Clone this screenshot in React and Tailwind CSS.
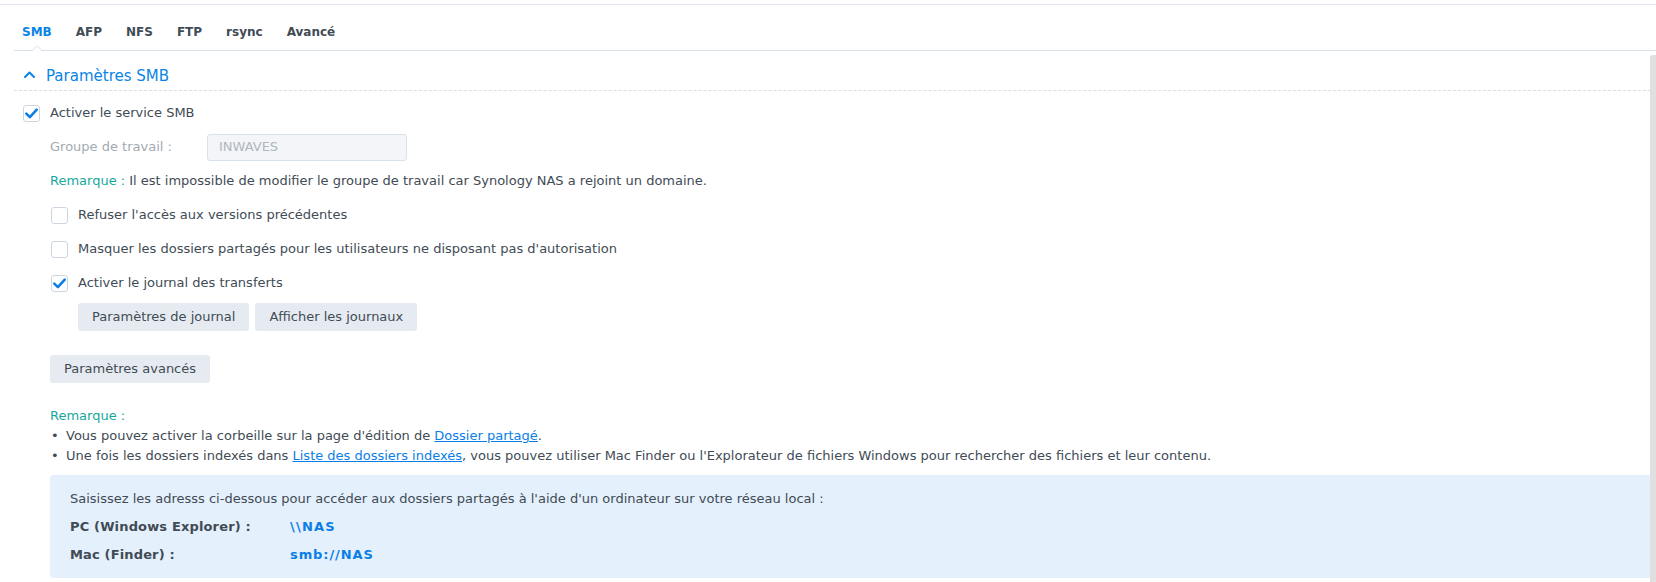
import React from "react";

const Check = ({ checked }) => (
  <span className="flex h-[17px] w-[17px] shrink-0 items-center justify-center rounded-[3px] border border-[#cdd6e0] bg-white">
    {checked && (
      <svg width="13" height="11" viewBox="0 0 13 11" fill="none">
        <path d="M1.3 5.6 L4.9 9.2 L11.7 1.6" stroke="#0a7ee6" strokeWidth="2.5" strokeLinecap="round" strokeLinejoin="round" />
      </svg>
    )}
  </span>
);

const Btn = ({ children }) => (
  <div className="flex h-[28px] items-center rounded-[3px] bg-[#e6ebf2] px-[14px] text-[13px] text-[#414b55]">{children}</div>
);

export default function App() {
  const tabs = ["SMB", "AFP", "NFS", "FTP", "rsync", "Avancé"];
  return (
    <div className="relative h-[582px] w-[1656px] overflow-hidden bg-white text-[13px] text-[#414b55]" style={{ fontFamily: '"DejaVu Sans", Verdana, sans-serif' }}>
      <div className="mt-[4px] border-t border-[#e0e6ee]" />
      {/* tabs */}
      <div className="relative ml-[14px] flex h-[46px] items-end gap-[24px] border-b border-[#d9e1ea] pb-[10px] pl-[8px] text-[12px] font-bold leading-[16px]">
        {tabs.map((t, i) => (
          <span key={t} className={i === 0 ? "text-[#0a84e6]" : "text-[#414b55]"}>{t}</span>
        ))}
        <svg className="absolute left-[17px] top-[40px]" width="12" height="7" viewBox="0 0 12 7">
          <path d="M0 6.5 L6 0.8 L12 6.5" fill="white" stroke="#d9e1ea" strokeWidth="1" />
          <rect x="0.8" y="6.2" width="10.4" height="1" fill="white" />
        </svg>
      </div>
      {/* section header */}
      <div className="ml-[14px] flex h-[40px] items-end gap-[11px] border-b border-dashed border-[#d6dee7] pb-[4px] pl-[10px]">
        <svg className="mb-[8px]" width="11" height="7" viewBox="0 0 11 7" fill="none">
          <path d="M1 6 L5.5 1.5 L10 6" stroke="#0a84e6" strokeWidth="2" strokeLinecap="round" strokeLinejoin="round" />
        </svg>
        <span className="text-[15px] leading-[20px] text-[#0a84e6]">Paramètres SMB</span>
      </div>
      {/* content */}
      <div className="flex flex-col pl-[23px] pt-[5px]">
        <div className="flex h-[34px] items-center gap-[10px]">
          <Check checked />
          <span>Activer le service SMB</span>
        </div>
        <div className="flex h-[34px] items-center pl-[27px]">
          <span className="w-[157px] text-[#a3aab2]">Groupe de travail :</span>
          <div className="flex h-[27px] w-[200px] items-center rounded-[3px] border border-[#d9e1ea] bg-[#f3f5f8] px-[11px] text-[#b0b7be]">INWAVES</div>
        </div>
        <div className="flex h-[34px] items-center pl-[27px]">
          <span className="text-[#16a89c]">Remarque :</span>
          <span className="ml-[4px]">Il est impossible de modifier le groupe de travail car Synology NAS a rejoint un domaine.</span>
        </div>
        <div className="flex h-[34px] items-center gap-[10px] pl-[28px]">
          <Check />
          <span>Refuser l'accès aux versions précédentes</span>
        </div>
        <div className="flex h-[34px] items-center gap-[10px] pl-[28px]">
          <Check />
          <span>Masquer les dossiers partagés pour les utilisateurs ne disposant pas d'autorisation</span>
        </div>
        <div className="flex h-[34px] items-center gap-[10px] pl-[28px]">
          <Check checked />
          <span>Activer le journal des transferts</span>
        </div>
        <div className="mt-[3px] flex gap-[6px] pl-[55px]">
          <Btn>Paramètres de journal</Btn>
          <Btn>Afficher les journaux</Btn>
        </div>
        <div className="mt-[24px] flex pl-[27px]">
          <Btn>Paramètres avancés</Btn>
        </div>
        <div className="mt-[23px] pl-[27px] leading-[20px]">
          <div className="text-[#16a89c]">Remarque :</div>
          <div className="flex">
            <span className="w-[16px] pl-[1px]">•</span>
            <span>
              Vous pouvez activer la corbeille sur la page d'édition de{" "}
              <span className="text-[#0a7ee6] underline">Dossier partagé</span>.
            </span>
          </div>
          <div className="flex">
            <span className="w-[16px] pl-[1px]">•</span>
            <span>
              Une fois les dossiers indexés dans{" "}
              <span className="text-[#0a7ee6] underline">Liste des dossiers indexés</span>, vous pouvez utiliser Mac Finder ou l'Explorateur de fichiers Windows pour rechercher des fichiers et leur contenu.
            </span>
          </div>
        </div>
        <div className="ml-[27px] mt-[9px] rounded-[4px] bg-[#e4f0fc] pb-[9px] pl-[20px] pt-[10px] leading-[28px]">
          <div>Saisissez les adresss ci-dessous pour accéder aux dossiers partagés à l'aide d'un ordinateur sur votre réseau local :</div>
          <div className="flex font-bold">
            <span className="w-[220px] tracking-[0.15px]">PC (Windows Explorer) :</span>
            <span className="tracking-[1.2px] text-[#0a7ee6]">\\NAS</span>
          </div>
          <div className="flex font-bold">
            <span className="w-[220px] tracking-[0.15px]">Mac (Finder) :</span>
            <span className="tracking-[0.9px] text-[#0a7ee6]">smb://NAS</span>
          </div>
        </div>
      </div>
      {/* scrollbar */}
      <div className="absolute right-0 top-[55px] h-[527px] w-[6px] rounded-tl-[3px] bg-[#e0e0e0]" />
    </div>
  );
}
